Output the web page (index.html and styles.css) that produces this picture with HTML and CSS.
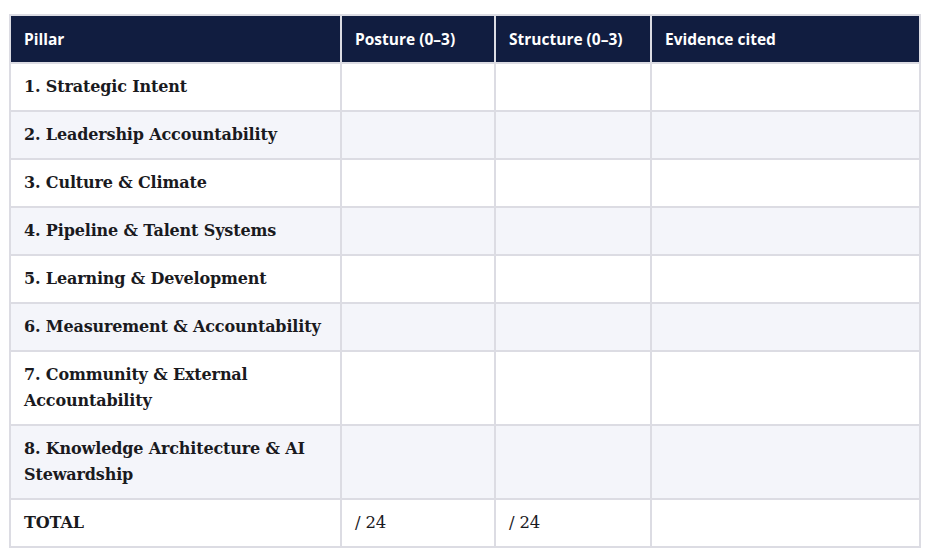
FILE: index.html
```html
<!DOCTYPE html>
<html lang="en">
<head>
<meta charset="utf-8">
<title>Pillar scoring</title>
<link rel="stylesheet" href="styles.css">
</head>
<body>
<table class="score">
  <colgroup>
    <col class="c-pillar">
    <col class="c-posture">
    <col class="c-structure">
    <col class="c-evidence">
  </colgroup>
  <thead>
    <tr>
      <th>Pillar</th>
      <th>Posture (0–3)</th>
      <th>Structure (0–3)</th>
      <th>Evidence cited</th>
    </tr>
  </thead>
  <tbody>
    <tr><td class="name">1. Strategic Intent</td><td></td><td></td><td></td></tr>
    <tr><td class="name">2. Leadership Accountability</td><td></td><td></td><td></td></tr>
    <tr><td class="name">3. Culture &amp; Climate</td><td></td><td></td><td></td></tr>
    <tr><td class="name">4. Pipeline &amp; Talent Systems</td><td></td><td></td><td></td></tr>
    <tr><td class="name">5. Learning &amp; Development</td><td></td><td></td><td></td></tr>
    <tr><td class="name">6. Measurement &amp; Accountability</td><td></td><td></td><td></td></tr>
    <tr><td class="name">7. Community &amp; External Accountability</td><td></td><td></td><td></td></tr>
    <tr><td class="name">8. Knowledge Architecture &amp; AI Stewardship</td><td></td><td></td><td></td></tr>
    <tr class="total"><td class="name">TOTAL</td><td>/ 24</td><td>/ 24</td><td></td></tr>
  </tbody>
</table>
</body>
</html>
```

FILE: styles.css
```css
html, body {
  margin: 0;
  padding: 0;
  background: #ffffff;
}
body {
  padding: 14px 0 0 9px;
}
.score {
  border-collapse: collapse;
  table-layout: fixed;
  width: 910px;
  border: 2px solid #dcdce3;
}
.c-pillar { width: 331px; }
.c-posture { width: 154px; }
.c-structure { width: 156px; }
.c-evidence { width: 269px; }

.score th {
  background: #111d40;
  color: #ffffff;
  font-family: "Open Sans", "Noto Sans", sans-serif;
  font-weight: 700;
  font-size: 15.5px;
  line-height: 26px;
  text-align: left;
  padding: 10px 13px 10px 13px;
  border: 2px solid #dcdce3;
  border-top: 0;
  border-bottom: 0;
}
.score th:first-child { border-left: 0; }
.score td {
  font-family: "DejaVu Serif", serif;
  font-size: 16px;
  letter-spacing: -0.15px;
  line-height: 26px;
  color: #1a1a1e;
  padding: 10px 13px;
  border: 2px solid #dcdce3;
  vertical-align: top;
}
.score td.name { font-weight: 700; }
.score tbody tr:nth-child(even) td { background: #f4f5fa; }
.score .total td { font-weight: 400; font-size: 16.5px; }
.score .total td.name { font-weight: 700; font-size: 16px; }
```
